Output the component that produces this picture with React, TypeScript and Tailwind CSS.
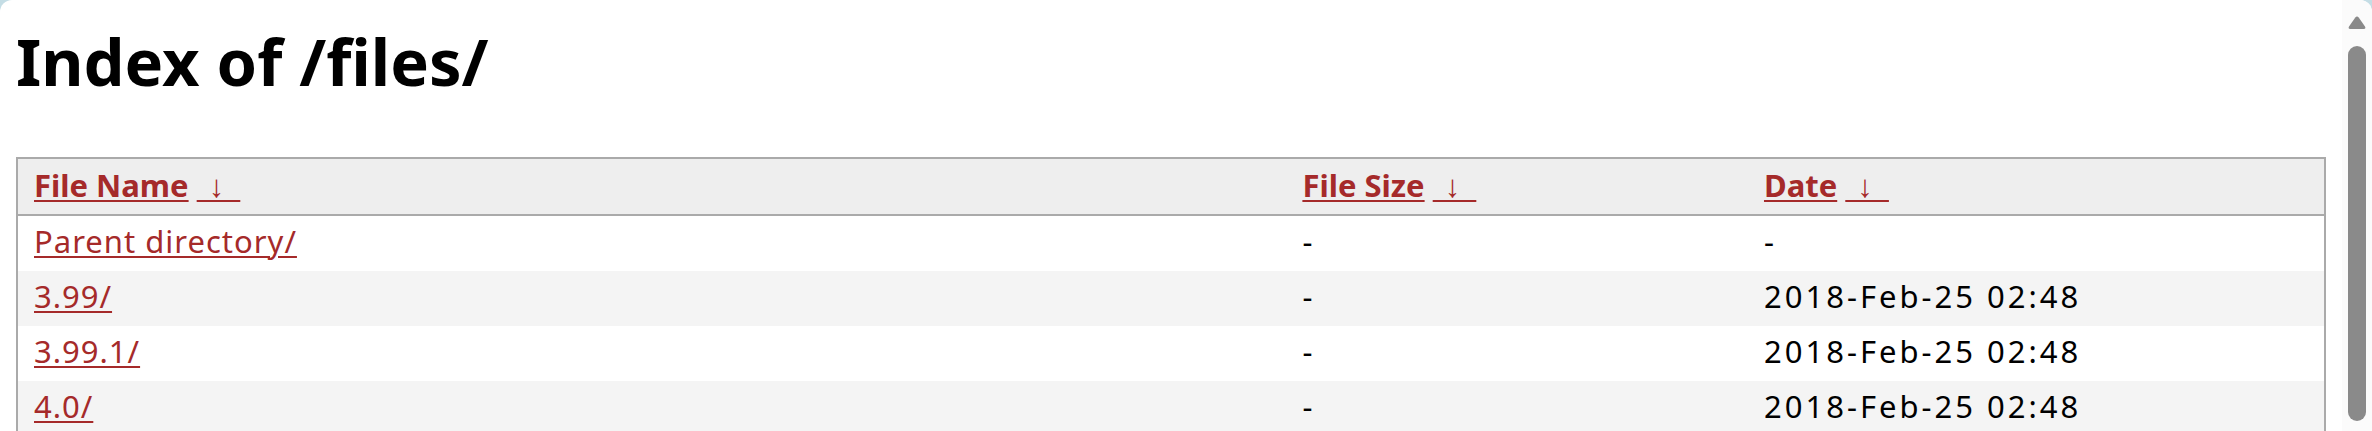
import React from 'react';

// Directory listing rows (fancyindex style)
const entries = [
  { name: 'Parent directory/', size: '-', date: '-' },
  { name: '3.99/', size: '-', date: '2018-Feb-25 02:48' },
  { name: '3.99.1/', size: '-', date: '2018-Feb-25 02:48' },
  { name: '4.0/', size: '-', date: '2018-Feb-25 02:48' },
];

const columns = [
  { label: 'File Name', width: 'w-[55%]' },
  { label: 'File Size', width: 'w-[20%]' },
  { label: 'Date', width: 'w-[25%]' },
];

function Scrollbar() {
  return (
    <div className="flex w-[30px] shrink-0 flex-col items-center bg-[#fbfbfb] pt-[16px]">
      <svg width="18" height="14" viewBox="0 0 18 14" className="block">
        <path d="M7.3 1.6 Q9 -0.4 10.7 1.6 L17 10.6 Q18.2 13 15.6 13 L2.4 13 Q-0.2 13 1 10.6 Z" fill="#8a8a8a" />
      </svg>
      <div className="mt-[16px] h-[375px] w-[18px] rounded-full bg-[#8a8a8a]" />
    </div>
  );
}

export default function App() {
  return (
    <div className="h-[431px] w-full overflow-hidden bg-[#c4dde5]">
      <div
        className="flex h-[431px] overflow-hidden rounded-t-[12px] bg-white"
        style={{ fontFamily: '"Noto Sans", "Open Sans", sans-serif' }}
      >
        <div className="min-w-0 flex-1 px-[16px] pt-[28px]">
          <h1 className="mb-[63px] text-[65px] font-bold leading-[66px] text-black">Index of /files/</h1>

          <table className="w-full table-fixed border-collapse border-2 border-[#aaaaaa]">
            <thead>
              <tr className="border-b-2 border-[#aaaaaa] bg-[#eeeeee]">
                {columns.map((col) => (
                  <th
                    key={col.label}
                    className={`${col.width} px-[16px] pb-[8px] pt-[5px] text-left text-[31px] font-bold leading-[42px]`}
                  >
                    <a href="#" className="text-[#a52a2a] underline decoration-2 underline-offset-[3px]">
                      {col.label}
                    </a>
                    {'\u00a0'}
                    <a
                      href="#"
                      className="text-[#a52a2a] tracking-[4px] underline decoration-2 underline-offset-[3px]"
                    >
                      {'\u00a0\u2193\u00a0'}
                    </a>
                  </th>
                ))}
              </tr>
            </thead>
            <tbody>
              {entries.map((entry, i) => (
                <tr key={entry.name} className={i % 2 === 1 ? 'bg-[#f4f4f4]' : 'bg-white'}>
                  <td className="px-[16px] pb-[9px] pt-[4px] text-[31px] leading-[42px] tracking-[1px]">
                    <a href="#" className="text-[#a52a2a] underline decoration-2 underline-offset-[3px]">
                      {entry.name}
                    </a>
                  </td>
                  <td className="px-[16px] pb-[9px] pt-[4px] text-[31px] leading-[42px] text-black">{entry.size}</td>
                  <td className="px-[16px] pb-[9px] pt-[4px] text-[31px] leading-[42px] tracking-[3px] text-black">
                    {entry.date}
                  </td>
                </tr>
              ))}
            </tbody>
          </table>
        </div>
        <Scrollbar />
      </div>
    </div>
  );
}
